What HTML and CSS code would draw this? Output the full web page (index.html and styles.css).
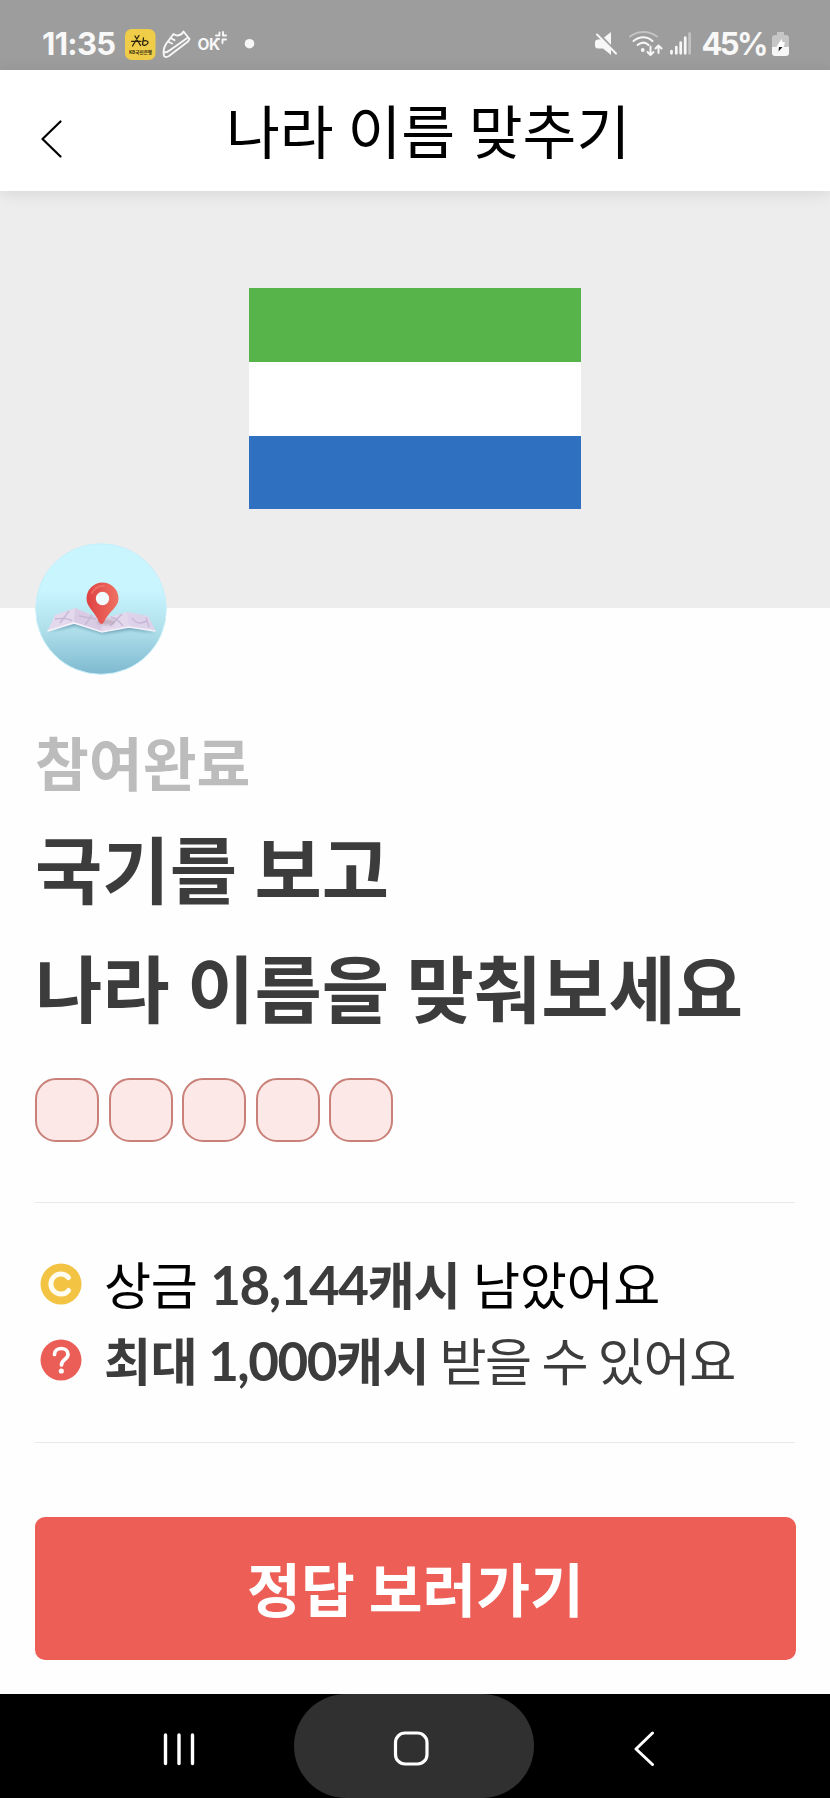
FILE: index.html
```html
<!DOCTYPE html>
<html lang="ko">
<head>
<meta charset="utf-8">
<title>나라 이름 맞추기</title>
<link rel="stylesheet" href="styles.css">
</head>
<body>
<div class="screen">
  <div class="status">
    <span class="clock">11:35</span>
    <svg class="status-left" width="140" height="34" viewBox="120 26 140 34" fill="none" stroke="#f7f7f7" stroke-linecap="round" stroke-linejoin="round">
      <rect x="125" y="29" width="30.500" height="31" rx="6.500" fill="#f0cd48" stroke="none"/>
      <path stroke="#2b250f" stroke-width="1.300" d="M131.500 41.300h9.500M139 35.500l-6.500 10.500M135 36l5.500 9.500M143.500 38l-1 6.500M142.700 41.500c3-2 6.300 0 5 2s-4 2.300-5.200 1"/>
      <text class="bank-name" x="140.500" y="53.800" text-anchor="middle">KB국민은행</text>
      <path stroke-width="1.900" d="M183.500 31.500l6 7.500-1.500 2.500-19 14.500q-3.500 2-5 0-1.500-6 2-12l7.500-10 3 1.500q5 0 7-4zM164 52.500q3 0 5.500-2L188 37.500M168 41.500l4 2M170.500 38l4 2.200"/>
      <text class="ok-mark" x="197.500" y="49.900">OK</text>
      <path stroke-width="1.900" d="M216 35.500h3.500v-3M223 32v3.500h3M216.500 39h2.500M222.500 43v-3.500h3.500"/>
      <circle cx="249.500" cy="43.700" r="4.800" fill="#f7f7f7" stroke="none"/>
    </svg>
    <svg class="status-right" width="102" height="34" viewBox="592 26 102 34" fill="none" stroke="#f7f7f7" stroke-linecap="round" stroke-linejoin="round">
      <path fill="#f7f7f7" stroke="none" d="M595 42.500q0-3 3-3l4-.3 9 9V55l-8-6.500h-5q-3 0-3-3zM604 37.500l7-5.500v13z"/>
      <path stroke-width="2" d="M597 34.500l19 19"/>
      <path stroke="#c3c3c3" stroke-width="2" d="M630 36.500c8-6 19-6 27 0"/>
      <path stroke-width="2" d="M633.500 41c6-5 13.500-5 19 0M637.500 45c4-3 8-3 11 0"/>
      <circle cx="642.700" cy="50" r="1.900" fill="#f7f7f7" stroke="none"/>
      <path stroke-width="2" d="M650.500 46.500V55M647.500 52l3 3 3-3M658.500 53v-7M655.500 48.500l3-3 3 3"/>
      <path stroke-width="2.700" d="M671.500 51v2.300M676.300 47v6.300M680.700 42.500v10.800M685.200 37.700v15.600"/>
      <path stroke="#c3c3c3" stroke-width="2.700" d="M689.600 33.500v19.800"/>
    </svg>
    <span class="percent">45%</span>
    <svg class="battery" width="18" height="26" viewBox="771 31 18 26">
      <path fill="#c6c6c6" d="M777 32h7v3h2q3 0 3 3v9h-17v-9q0-3 3-3h2z"/>
      <path fill="#f7f7f7" d="M772 47h17v6q0 3-3 3h-11q-3 0-3-3z"/>
      <path fill="#fff" d="M781.500 39l-5 7.500 4 1h3l1.500-5-2.500-.5z"/>
      <path fill="#222" d="M779 47h3.500l-4 4.500z"/>
    </svg>
  </div>
  <header class="header">
    <svg class="back" width="22" height="38" viewBox="0 0 22 38" fill="none" stroke="#000" stroke-width="2.200" stroke-linecap="round" stroke-linejoin="round"><path d="M19.500 1.500L1.500 19l18 17.500"/></svg>
    <h1 class="title">나라 이름 맞추기</h1>
  </header>
  <div class="hero">
    <div class="flag"><i class="green"></i><i class="white"></i><i class="blue"></i></div>
    <svg class="badge" width="132" height="132" viewBox="0 0 132 132">
      <defs>
        <linearGradient id="sky" x2="0" y2="1"><stop offset=".35" stop-color="#c9f5ff"/><stop offset=".66" stop-color="#afdfea"/><stop offset="1" stop-color="#7eb9d0"/></linearGradient>
        <linearGradient id="pin"><stop stop-color="#df4143"/><stop offset="1" stop-color="#ef7162"/></linearGradient>
        <filter id="soft" x="-20%" y="-50%" width="140%" height="220%"><feGaussianBlur stdDeviation="1.500"/></filter>
      </defs>
      <circle cx="66" cy="66" r="65.300" fill="url(#sky)" stroke="#c5effa"/>
      <path d="M14 89l26-6 28 8 27-4 26 3-26-8-27 4-26-9z" fill="#5c91a8" opacity=".7" filter="url(#soft)"/>
      <path d="M12.500 88l7.500-16 20-7 26 11 26-7 21 4 7.500 15-26-4-27 5-28-9z" fill="#e3d8ec"/>
      <path d="M40 65l26 11 1 13-28-9z" fill="#d8cbe3"/>
      <path d="M92 69l21 4 7.500 15-26-4z" fill="#dcd2e9"/>
      <g fill="none" stroke="#c6b8d6" stroke-width="1.400"><path d="M20 76q12-2 17 2M34 68L25 80M50 82l7-10M44 73l17 3M76 74q7 2 12 9M87 71L75 83M97 75q5 8 15 3M111 75l3 9"/></g>
      <path d="M12.500 88l26.500-8 28 9 27-5 26.500 4" fill="none" stroke="#f6f1fa" stroke-width="1.700"/>
      <ellipse cx="71" cy="79" rx="9" ry="3" fill="#937080" opacity=".4" filter="url(#soft)"/>
      <circle cx="67.500" cy="55.500" r="7" fill="#f1fbfd"/>
      <path fill="url(#pin)" fill-rule="evenodd" d="M67.500 39.500a16 16 0 0 0-16 16c0 9 8.500 13 12.500 23.500q2.500 4 5 0C73.500 68.500 83.500 64.500 83.500 55.500a16 16 0 0 0-16-16zM67.500 48.800a6.700 6.700 0 1 1 0 13.400 6.700 6.700 0 0 1 0-13.400z"/>
      <path d="M57 50q4-8 12-7" fill="none" stroke="#f28078" stroke-width="2" stroke-linecap="round" opacity=".6"/>
    </svg>
  </div>
  <main class="content">
    <p class="state">참여완료</p>
    <h2 class="question">국기를 보고<br>나라 이름을 맞춰보세요</h2>
    <div class="slots"><i></i><i></i><i></i><i></i><i></i></div>
    <section class="prizes">
      <div class="prize first">
        <svg width="42" height="42" viewBox="0 0 42 42"><circle cx="21" cy="21" r="20.500" fill="#f3c344"/><path d="M28.500 14.500a10 10 0 1 0 0 13" fill="none" stroke="#fffdf0" stroke-width="5" stroke-linecap="round"/></svg>
        <p>상금 <b><span class="num">18,144</span>캐시</b> 남았어요</p>
      </div>
      <div class="prize second">
        <svg width="42" height="42" viewBox="0 0 42 42"><circle cx="21" cy="21" r="20.500" fill="#eb5d57"/><path d="M14.500 15.500c0-8 13.500-8 13.500 0 0 5-6.500 4.500-6.500 10.500" fill="none" stroke="#fff" stroke-width="3.700" stroke-linecap="round"/><circle cx="21.300" cy="32" r="2.600" fill="#fff"/></svg>
        <p><b>최대 <span class="num">1,000</span>캐시</b> 받을 수 있어요</p>
      </div>
    </section>
    <button class="answer">정답 보러가기</button>
  </main>
  <nav class="nav">
    <svg class="recent" width="34" height="36" viewBox="0 0 34 36" fill="none" stroke="#fff" stroke-width="3.400" stroke-linecap="round"><path d="M3.500 3v28.500M17 3v28.500M30.500 3v28.500"/></svg>
    <div class="home"><svg width="36" height="36" viewBox="0 0 36 36" fill="none" stroke="#fff" stroke-width="3.200"><rect x="2.500" y="2" width="31.500" height="31" rx="9.500"/></svg></div>
    <svg class="nav-back" width="22" height="36" viewBox="0 0 22 36" fill="none" stroke="#fff" stroke-width="3" stroke-linecap="round" stroke-linejoin="round"><path d="M18.500 2L2 18l16.500 15.500"/></svg>
  </nav>
</div>
</body>
</html>
```
FILE: styles.css
```css
* { box-sizing: border-box; margin: 0; }
body { font-family: "Noto Sans CJK KR", sans-serif; background: #fefefe; }
.screen { width: 830px; height: 1798px; display: flex; flex-direction: column; overflow: hidden; }
svg { display: block; flex: none; }

.status { height: 70px; flex: none; display: flex; align-items: flex-start; padding: 26px 0 0 42px; background: #9d9d9d; color: #f8f8f8; }
.clock, .percent { font: 700 31px/36px Inter, sans-serif; white-space: nowrap; }
.clock { width: 78px; letter-spacing: -0.7px; }
.bank-name { font: 700 4.600px "Noto Sans CJK KR", sans-serif; fill: #3a3010; stroke: none; }
.ok-mark { font: 700 15.500px Inter, sans-serif; letter-spacing: -0.5px; fill: #f7f7f7; stroke: none; }
.status-right { margin-left: 332px; }
.percent { width: 77px; padding-left: 7.500px; letter-spacing: -2.600px; }
.battery { margin-top: 5px; }

.header { position: relative; z-index: 1; height: 121px; flex: none; display: flex; padding: 50px 0 0 41px; background: #fff; box-shadow: 0 2px 16px rgba(0, 0, 0, .1); }
.title { margin: -36px 0 0 163px; font-size: 58.500px; font-weight: 400; line-height: 90px; color: #000; white-space: nowrap; word-spacing: -0.045em; }

.hero { position: relative; height: 417px; flex: none; display: flex; justify-content: center; padding-top: 97px; background: #ededed; }
.flag { width: 332px; height: 221px; display: flex; flex-direction: column; }
.flag i { height: 74px; }
.green { background: #56b44b; }
.white { background: #fff; }
.flag .blue { height: 73px; background: #3070c0; }
.badge { position: absolute; left: 35px; top: 352px; }

.content { flex: 1; padding: 109px 35px 0; color: #3c3c3c; }
.state { font-size: 58.500px; font-weight: 700; line-height: 87px; color: #bcbcbc; }
.question { margin-top: 2.500px; font-size: 73.200px; font-weight: 700; line-height: 119px; white-space: nowrap; word-spacing: -0.042em; }
.slots { display: flex; gap: 9.600px; margin-top: 33.500px; }
.slots i { width: 64px; height: 64px; border: 2px solid #c98079; border-radius: 21px; background: #fce8e6; }
.prizes { margin-top: 59.500px; padding: 42px 0 45px; border-top: 1.500px solid #e8e8e8; border-bottom: 1.500px solid #e8e8e8; }
.prize { display: flex; align-items: center; gap: 22px; padding-left: 5px; height: 76px; }
.prize svg { margin-top: 3px; }
.prize p { padding-top: 1px; font-size: 51.200px; line-height: 76px; white-space: nowrap; letter-spacing: -0.4px; word-spacing: -0.02em; }
.prize.first p { color: #000; }
.prize.second p { letter-spacing: -1.400px; word-spacing: -0.045em; }
.prize b { font-weight: 700; color: #3c3c3c; letter-spacing: -0.7px; }
.num { font-family: Lato, sans-serif; font-size: 53px; line-height: 1; letter-spacing: -1.500px; }
.answer { display: block; width: 761px; height: 143px; margin-top: 74px; padding: 0 0 2px; border: 0; border-radius: 10px; background: #ed5e56; color: #fff; font: 700 58.500px/86px "Noto Sans CJK KR", sans-serif; word-spacing: -0.042em; }

.nav { height: 104px; flex: none; display: flex; align-items: flex-start; background: #000; }
.recent { margin: 38px 0 0 162px; }
.home { width: 240px; height: 104px; margin-left: 98px; padding: 37px 0 0 99px; border-radius: 52px; background: #303030; }
.nav-back { margin: 37px 0 0 100px; }
```
